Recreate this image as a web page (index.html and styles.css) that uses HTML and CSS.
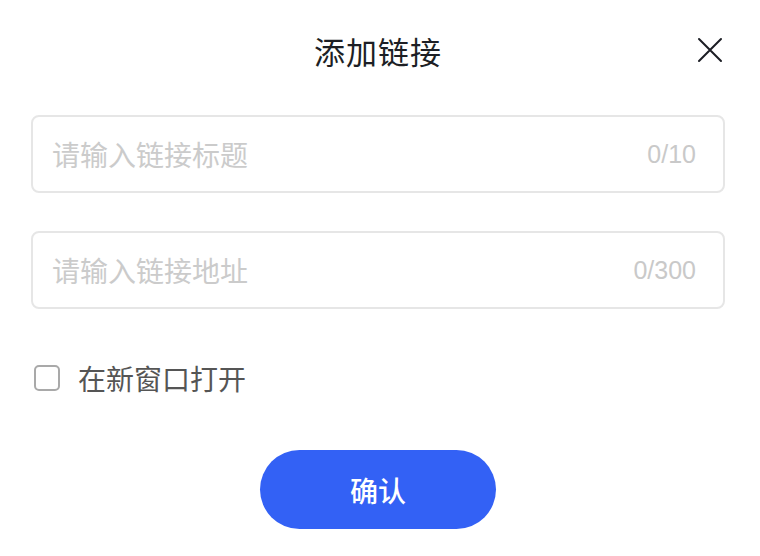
FILE: index.html
```html
<!DOCTYPE html>
<html lang="zh-CN">
<head>
<meta charset="utf-8">
<title>添加链接</title>
<link rel="stylesheet" href="styles.css">
</head>
<body>
<div class="dialog">
  <div class="header">
    <span></span>
    <h1 class="title">添加链接</h1>
    <button class="close" aria-label="关闭">
      <svg width="26" height="26" viewBox="0 0 26 26"><path d="M2 2 L24 24 M24 2 L2 24" stroke="#1b1d24" stroke-width="2" fill="none" stroke-linecap="round"/></svg>
    </button>
  </div>
  <div class="field">
    <input class="field-input" type="text" placeholder="请输入链接标题">
    <span class="count">0/10</span>
  </div>
  <div class="field field-second">
    <input class="field-input" type="text" placeholder="请输入链接地址">
    <span class="count">0/300</span>
  </div>
  <label class="check-row">
    <span class="checkbox"></span>
    <span class="check-label">在新窗口打开</span>
  </label>
  <div class="actions">
    <button class="confirm">确认</button>
  </div>
</div>
</body>
</html>
```
FILE: styles.css
```css
* { box-sizing: border-box; }
html, body {
  margin: 0;
  background: #ffffff;
  font-family: "Noto Sans CJK SC", "Noto Sans", sans-serif;
}
.dialog {
  width: 760px;
  height: 556px;
  padding: 0 35px 0 31px;
}
.header {
  height: 100px;
  display: grid;
  grid-template-columns: 1fr auto 1fr;
  align-items: center;
}
.title {
  margin: 0;
  font-size: 31px;
  font-weight: 400;
  color: #1d1f25;
  letter-spacing: 1px;
  line-height: 1;
}
.close {
  justify-self: end;
  margin-right: 2px;
  border: 0;
  padding: 0;
  background: none;
  width: 26px;
  height: 26px;
  display: flex;
}
.field {
  margin-top: 15px;
  height: 78px;
  border: 2px solid #e6e6e6;
  border-radius: 8px;
  display: flex;
  align-items: center;
  padding: 0 27px 0 19px;
}
.field-second { margin-top: 38px; }
.field-input {
  flex: 1;
  min-width: 0;
  border: 0;
  outline: none;
  background: transparent;
  font-family: "Noto Sans CJK SC", "Noto Sans", sans-serif;
  font-size: 28px;
  color: #333;
  padding: 0;
}
.field-input::placeholder { color: #cbcbcb; }
.count {
  font-family: "Liberation Sans", Arial, sans-serif;
  font-size: 25px;
  color: #c9c9c9;
}
.check-row {
  margin-top: 49px;
  height: 40px;
  display: flex;
  align-items: center;
  padding-left: 3px;
}
.checkbox {
  width: 26px;
  height: 26px;
  border: 2px solid #a9a9a9;
  border-radius: 5px;
}
.check-label {
  margin-left: 18px;
  font-size: 28px;
  color: #555555;
}
.actions {
  margin-top: 52px;
  display: flex;
  justify-content: center;
}
.confirm {
  width: 236px;
  height: 79px;
  border: 0;
  border-radius: 40px;
  background: #3361f5;
  color: #ffffff;
  font-family: "Noto Sans CJK SC", "Noto Sans", sans-serif;
  font-size: 28px;
  font-weight: 500;
}
```
